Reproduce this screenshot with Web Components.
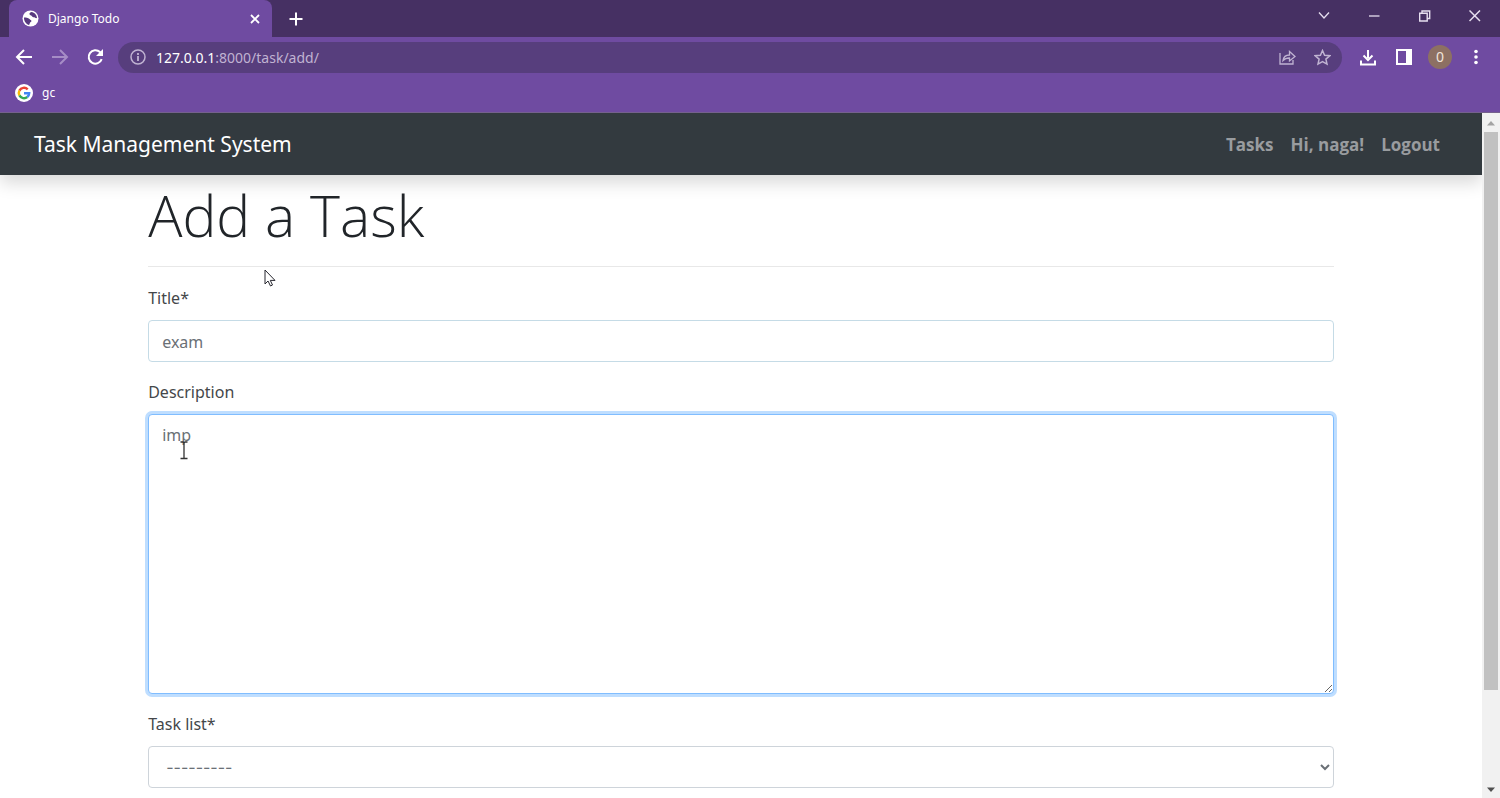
<!DOCTYPE html>
<html lang="en">
<head>
<meta charset="utf-8">
<title>Django Todo</title>
<style>
  html, body {
    height: 100%;
    margin: 0;
  }
  body {
    display: flex;
    flex-direction: column;
    overflow: hidden;
    background: #fff;
    color: #44474a;
    font-family: "Noto Sans", "Open Sans", sans-serif;
    font-size: 16px;
  }
</style>
</head>
<body>
  <browser-chrome>
    <browser-tab slot="tab">Django Todo</browser-tab>
    <address-bar slot="address" host="127.0.0.1" path=":8000/task/add/"></address-bar>
    <bookmark-link slot="bookmark" href="#gc">gc</bookmark-link>
  </browser-chrome>
  <page-view>
    <site-navbar>
      <span slot="brand">Task Management System</span>
      <nav-link href="#tasks">Tasks</nav-link>
      <nav-link href="#profile">Hi, naga!</nav-link>
      <nav-link href="#logout">Logout</nav-link>
    </site-navbar>
    <task-form>
      <span slot="heading">Add a Task</span>
      <form-field type="text" label="Title*" value="exam"></form-field>
      <form-field type="textarea" label="Description" value="imp" active></form-field>
      <form-field type="select" label="Task list*" value="---------"></form-field>
    </task-form>
    <mouse-pointer></mouse-pointer>
  </page-view>

<script>
/**
 * Creates a template element from a string.
 *
 * @param {string} html - The markup.
 * @returns {HTMLTemplateElement} The template.
 */
const createTemplate = html => {
  const template = document.createElement('template')
  template.innerHTML = html
  return template
}

const chromeTemplate = createTemplate(`
  <style>
    :host {
      display: block;
      flex: none;
      background: #6f4ba1;
      color: #fff;
      border-bottom: 1px solid #75618d;
    }
    button {
      display: flex;
      align-items: center;
      justify-content: center;
      padding: 0;
      border: none;
      background: none;
      color: inherit;
      cursor: pointer;
    }
    svg {
      display: block;
      fill: none;
      stroke: currentColor;
      stroke-width: 2;
    }
    .strip {
      display: flex;
      height: 37px;
      padding-left: 9px;
      background: #463063;
    }
    .new {
      width: 48px;
    }
    .window {
      display: flex;
      margin-left: auto;
      height: 32px;
      color: #e6deef;
    }
    .window button {
      width: 50px;
    }
    .toolbar {
      display: flex;
      align-items: center;
      height: 40px;
      padding: 0 6px;
    }
    .toolbar button {
      width: 36px;
      height: 36px;
    }
    .toolbar .forward {
      color: #a68dc6;
    }
    slot[name="address"] {
      display: block;
      flex: 1;
      margin: 0 8px 0 4px;
    }
    .avatar span {
      width: 24px;
      border-radius: 50%;
      background: #8d7063;
      color: #f2e6dc;
      font: 14px/24px "Noto Sans", sans-serif;
    }
    .bookmarks {
      display: flex;
      align-items: center;
      height: 35px;
      padding: 0 15px 4px;
      box-sizing: border-box;
    }
  </style>
  <div class="strip">
    <slot name="tab"></slot>
    <button class="new" aria-label="New tab">
      <svg width="14" height="14" viewBox="0 0 14 14"><path d="M7 0.5v13M0.5 7h13"/></svg>
    </button>
    <div class="window">
      <button aria-label="Search tabs">
        <svg width="14" height="14" viewBox="0 0 14 14"><path d="M1 3.500L6 9l5-5.500" stroke-width="1.300"/></svg>
      </button>
      <button aria-label="Minimize">
        <svg width="12" height="12" viewBox="0 0 12 12"><path d="M0 6h10.500" stroke-width="1.300"/></svg>
      </button>
      <button aria-label="Restore">
        <svg width="12" height="12" viewBox="0 0 12 12"><path d="M.7 3.300h7.500V11H.7zM3 3.300V1h7.700v7.500H8.200" stroke-width="1.400"/></svg>
      </button>
      <button aria-label="Close">
        <svg width="12" height="12" viewBox="0 0 12 12"><path d="M0.500 0.500l10.500 10.500M11 0.500L0.500 11" stroke-width="1.500"/></svg>
      </button>
    </div>
  </div>
  <div class="toolbar">
    <button aria-label="Back">
      <svg width="18" height="18" viewBox="0 0 18 18"><path d="M17 9H2.500M9 2L2 9l7 7"/></svg>
    </button>
    <button class="forward" aria-label="Forward">
      <svg width="18" height="18" viewBox="0 0 18 18"><path d="M1 9h14.500M9 2l7 7-7 7"/></svg>
    </button>
    <button aria-label="Reload">
      <svg width="18" height="18" viewBox="0 0 18 18"><path d="M14.700 11.200A6.700 6.700 0 1 1 13 4.100l1 1"/><path d="M16 1v7H9z" fill="currentColor" stroke="none"/></svg>
    </button>
    <slot name="address"></slot>
    <button aria-label="Downloads">
      <svg width="18" height="18" viewBox="0 0 18 18"><path d="M9 2v8M2 12.500v4h14v-4"/><path d="M4.500 7.500L9 12l4.500-4.500" fill="none"/></svg>
    </button>
    <button aria-label="Side panel">
      <svg width="16" height="16" viewBox="0 0 16 16"><path d="M1 1h14v14H1z"/><path d="M10 1h5v14h-5z" fill="currentColor" stroke="none"/></svg>
    </button>
    <button class="avatar" aria-label="Profile"><span>0</span></button>
    <button aria-label="Menu">
      <svg width="4" height="16" viewBox="0 0 4 16"><g fill="currentColor" stroke="none"><circle cx="2" cy="2.500" r="1.800"/><circle cx="2" cy="8" r="1.800"/><circle cx="2" cy="13.500" r="1.800"/></g></svg>
    </button>
  </div>
  <div class="bookmarks">
    <slot name="bookmark"></slot>
  </div>
`)

customElements.define('browser-chrome',
  /**
   * The window frame: tab strip, toolbar and bookmarks.
   */
  class extends HTMLElement {
    constructor () {
      super()
      this.attachShadow({ mode: 'open' })
        .appendChild(chromeTemplate.content.cloneNode(true))
    }
  }
)

const tabTemplate = createTemplate(`
  <style>
    :host {
      display: flex;
      align-items: center;
      gap: 9px;
      box-sizing: border-box;
      width: 263px;
      padding: 0 9px 0 13px;
      border-radius: 8px 8px 0 0;
      background: #6f4ba1;
      font-size: 12px;
    }
    .title {
      flex: 1;
    }
    svg {
      display: block;
    }
    button {
      padding: 3px;
      border: none;
      background: none;
      color: #fff;
      cursor: pointer;
    }
  </style>
  <svg width="17" height="17" viewBox="0 0 17 17">
    <circle cx="8.500" cy="8.500" r="8" fill="#fff"/>
    <path d="M2 7.500c2 0 4 0 5.500 1.500 1 1.200 1.800 1 2 2 .1 1-1.500 1-1.800 2.500-.1.800-.4 1.300-.8 1.500C4 14 1.800 11 2 7.500zM9.500 2C7.500 2.500 7 4 7.800 4.800c1 .8 1.600.4 2.200 1.500.6 1.100 1.300 1 2.300 1 1 .1 1 1.200 2.700.7C14.900 5 12.500 2.500 9.500 2z" fill="#57397f"/>
  </svg>
  <span class="title"><slot></slot></span>
  <button aria-label="Close tab">
    <svg width="10" height="10" viewBox="0 0 10 10"><path d="M1 1l8 8M9 1L1 9" stroke="currentColor" stroke-width="1.800"/></svg>
  </button>
`)

customElements.define('browser-tab',
  /**
   * Represents one open tab.
   */
  class extends HTMLElement {
    constructor () {
      super()
      this.attachShadow({ mode: 'open' })
        .appendChild(tabTemplate.content.cloneNode(true))
    }
  }
)

const addressTemplate = createTemplate(`
  <style>
    :host {
      display: flex;
      align-items: center;
      height: 31px;
      padding: 0 11px 0 12px;
      border-radius: 16px;
      background: #573e7d;
      color: #c0b3d2;
      font-size: 14px;
    }
    .url {
      flex: 1;
      margin-left: 10px;
    }
    #host {
      color: #fff;
    }
    button {
      display: flex;
      padding: 0;
      margin-left: 18px;
      border: none;
      background: none;
      color: inherit;
      cursor: pointer;
    }
    svg {
      fill: none;
      stroke: currentColor;
      stroke-width: 1.500;
    }
  </style>
  <svg width="16" height="16" viewBox="0 0 16 16"><circle cx="8" cy="8" r="7"/><path d="M8 7v5M8 4v2" stroke-width="1.800"/></svg>
  <span class="url"><span id="host"></span><span id="path"></span></span>
  <button aria-label="Share">
    <svg width="17" height="17" viewBox="0 0 17 17"><path d="M1 4v11h13v-4M4 11.500c.5-4 3-5.500 6.500-5.500V2.500l5.500 5-5.500 4.500V9C7.500 9 5.500 9.800 4 11.500z" stroke-width="1.300"/></svg>
  </button>
  <button aria-label="Bookmark this tab">
    <svg width="17" height="17" viewBox="0 0 17 17"><path d="M8.500 1.500l2.100 4.700 5.200.5-3.900 3.400 1.100 5-4.500-2.600L4 15.100l1.100-5L1.200 6.700l5.200-.5z"/></svg>
  </button>
`)

customElements.define('address-bar',
  /**
   * Shows the address of the page.
   */
  class extends HTMLElement {
    constructor () {
      super()
      this.attachShadow({ mode: 'open' })
        .appendChild(addressTemplate.content.cloneNode(true))
    }

    /**
     * Called by the browser when added to the DOM.
     */
    connectedCallback () {
      this.shadowRoot.querySelector('#host').textContent = this.getAttribute('host')
      this.shadowRoot.querySelector('#path').textContent = this.getAttribute('path')
    }
  }
)

const bookmarkTemplate = createTemplate(`
  <style>
    :host {
      display: block;
      font-size: 12px;
    }
    a {
      display: flex;
      align-items: center;
      gap: 9px;
      color: #fff;
      text-decoration: none;
    }
  </style>
  <a>
    <svg width="18" height="18" viewBox="0 0 18 18">
      <circle cx="9" cy="9" r="9" fill="#fff"/>
      <g fill="none" stroke-width="2.400">
        <path d="M12.700 5.300A5.200 5.200 0 0 0 4.400 6.600" stroke="#ea4335"/>
        <path d="M4.400 6.600a5.200 5.200 0 0 0 0 4.800" stroke="#fbbc05"/>
        <path d="M4.400 11.400a5.200 5.200 0 0 0 7.900 1.600" stroke="#34a853"/>
        <path d="M12.300 13A5.200 5.200 0 0 0 14.200 9.200H9" stroke="#4285f4"/>
      </g>
    </svg>
    <slot></slot>
  </a>
`)

customElements.define('bookmark-link',
  /**
   * A link in the bookmarks bar.
   */
  class extends HTMLElement {
    constructor () {
      super()
      this.attachShadow({ mode: 'open' })
        .appendChild(bookmarkTemplate.content.cloneNode(true))
    }

    /**
     * Called by the browser when added to the DOM.
     */
    connectedCallback () {
      this.shadowRoot.querySelector('a').href = this.getAttribute('href')
    }
  }
)

const viewTemplate = createTemplate(`
  <style>
    :host {
      display: flex;
      flex: 1;
      min-height: 0;
    }
    main {
      position: relative;
      flex: 1;
      min-width: 0;
      overflow: hidden;
    }
    .scrollbar {
      display: flex;
      flex-direction: column;
      align-items: center;
      box-sizing: border-box;
      width: 18px;
      padding: 7px 0 5px;
      background: #f1f1f1;
    }
    .track {
      flex: 1;
      width: 14px;
      margin: 6px 0;
    }
    .thumb {
      height: 86%;
      background: #c1c1c1;
    }
  </style>
  <main><slot></slot></main>
  <div class="scrollbar">
    <svg width="8" height="6" viewBox="0 0 8 6"><path d="M0 5.500l4-4.500 4 4.500z" fill="#a3a3a3"/></svg>
    <div class="track"><div class="thumb"></div></div>
    <svg width="8" height="6" viewBox="0 0 8 6"><path d="M0 .5L4 5 8 .5z" fill="#505050"/></svg>
  </div>
`)

customElements.define('page-view',
  /**
   * The visible part of the page with its scrollbar.
   */
  class extends HTMLElement {
    constructor () {
      super()
      this.attachShadow({ mode: 'open' })
        .appendChild(viewTemplate.content.cloneNode(true))
    }
  }
)

const navbarTemplate = createTemplate(`
  <style>
    :host {
      display: block;
      position: relative;
      background: #333a3f;
      box-shadow: 0 8px 16px rgba(0, 0, 0, 0.15);
    }
    nav {
      display: flex;
      align-items: center;
      gap: 17px;
      min-height: 62px;
      padding: 0 42px 0 34px;
    }
    .brand {
      margin-right: auto;
      color: #fff;
      font-size: 21px;
      text-decoration: none;
    }
  </style>
  <nav>
    <a class="brand" href="#home"><slot name="brand"></slot></a>
    <slot></slot>
  </nav>
`)

customElements.define('site-navbar',
  /**
   * Represents the navbar of the site.
   */
  class extends HTMLElement {
    constructor () {
      super()
      this.attachShadow({ mode: 'open' })
        .appendChild(navbarTemplate.content.cloneNode(true))
    }
  }
)

const navLinkTemplate = createTemplate(`
  <style>
    :host {
      display: block;
    }
    a {
      color: #999c9f;
      font-family: "Open Sans", sans-serif;
      font-size: 17px;
      font-weight: 700;
      text-decoration: none;
    }
  </style>
  <a><slot></slot></a>
`)

customElements.define('nav-link',
  /**
   * A link in the navbar.
   */
  class extends HTMLElement {
    constructor () {
      super()
      this.attachShadow({ mode: 'open' })
        .appendChild(navLinkTemplate.content.cloneNode(true))
    }

    /**
     * Called by the browser when added to the DOM.
     */
    connectedCallback () {
      this.shadowRoot.querySelector('a').href = this.getAttribute('href')
    }
  }
)

const formTemplate = createTemplate(`
  <style>
    :host {
      display: block;
      padding: 0 10%;
    }
    h1 {
      margin: 0;
      padding: 4px 0 15px;
      border-bottom: 1px solid #e8e8e8;
      color: #212529;
      font-family: "Open Sans", sans-serif;
      font-size: 57px;
      font-weight: 300;
      line-height: 72px;
    }
    form {
      display: flex;
      flex-direction: column;
      gap: 17px;
      padding: 18px 0;
    }
  </style>
  <h1><slot name="heading"></slot></h1>
  <form><slot></slot></form>
`)

customElements.define('task-form',
  /**
   * Represents the form for a new task.
   */
  class extends HTMLElement {
    constructor () {
      super()
      this.attachShadow({ mode: 'open' })
        .appendChild(formTemplate.content.cloneNode(true))
    }
  }
)

const fieldTemplate = createTemplate(`
  <style>
    :host {
      display: block;
    }
    label {
      display: block;
      margin-bottom: 8px;
      line-height: 27px;
    }
    input, textarea, select {
      display: block;
      box-sizing: border-box;
      width: 100%;
      height: 42px;
      margin: 0;
      padding: 7px 13px;
      border: 1px solid #ced4da;
      border-radius: 4px;
      outline: none;
      background: #fff;
      color: #6a7076;
      font: inherit;
      line-height: 26px;
    }
    input {
      border-color: #c5dbe6;
      padding-top: 9px;
    }
    textarea {
      height: 280px;
      resize: vertical;
    }
    select {
      font-family: Inter, sans-serif;
    }
    :host([active]) textarea {
      border-color: #80bdff;
      box-shadow: 0 0 0 3px #bfdeff;
    }
  </style>
  <label for="control"></label>
`)

customElements.define('form-field',
  /**
   * A label with its control: an input, a textarea or a select.
   */
  class extends HTMLElement {
    constructor () {
      super()
      this.attachShadow({ mode: 'open' })
        .appendChild(fieldTemplate.content.cloneNode(true))
    }

    /**
     * Called by the browser when added to the DOM.
     */
    connectedCallback () {
      const type = this.getAttribute('type')
      const value = this.getAttribute('value')
      this.shadowRoot.querySelector('label').textContent = this.getAttribute('label')

      const control = document.createElement(type === 'text' ? 'input' : type)
      control.id = 'control'
      if (type === 'select') {
        control.add(new Option(value, ''))
      } else {
        control.value = value
        control.spellcheck = false
      }
      this.shadowRoot.appendChild(control)
    }
  }
)

const pointerTemplate = createTemplate(`
  <style>
    :host {
      pointer-events: none;
    }
    svg {
      position: absolute;
    }
    .arrow {
      left: 264px;
      top: 156px;
    }
    .beam {
      left: 179px;
      top: 328px;
    }
  </style>
  <svg class="arrow" width="12" height="18" viewBox="0 0 12 18"><path d="M1 1v14l3-3 2.500 5 2-1-2.200-4.600H11z" fill="#fff" stroke="#26262e"/></svg>
  <svg class="beam" width="10" height="19" viewBox="0 0 10 19"><path d="M1.500 1H4l1 1 1-1h2.500M5 2v15M1.500 17.500h7" fill="none" stroke="#333" stroke-width="1.300"/></svg>
`)

customElements.define('mouse-pointer',
  /**
   * The arrow and the text beam over the page.
   */
  class extends HTMLElement {
    constructor () {
      super()
      this.attachShadow({ mode: 'open' })
        .appendChild(pointerTemplate.content.cloneNode(true))
    }
  }
)
</script>
</body>
</html>
